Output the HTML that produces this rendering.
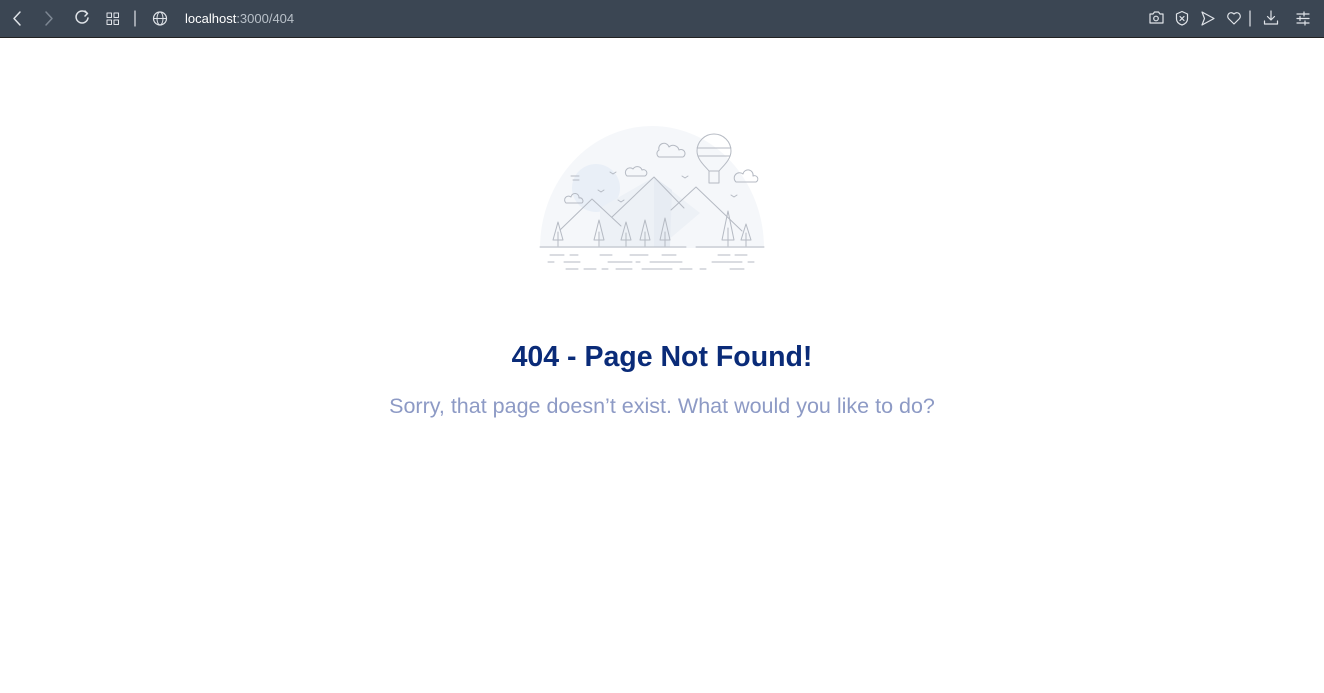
<!DOCTYPE html>
<html><head><meta charset="utf-8"><style>
*{margin:0;padding:0;box-sizing:border-box}
body{width:1324px;height:693px;background:#fff;font-family:"Liberation Sans",sans-serif;overflow:hidden;position:relative}
.bar{position:absolute;left:0;top:0;width:1324px;height:38px;background:#3b4653;border-bottom:1px solid #222}
.url{position:absolute;left:185px;top:11px;font-size:13px;color:#fff}
.url span{color:#b8c0c8}
h1{position:absolute;top:341px;left:0;width:1324px;text-align:center;font-size:28.5px;font-weight:bold;color:#0a2b78}
p{position:absolute;top:394px;left:0;width:1324px;text-align:center;font-size:21.5px;color:#8d9ac5}
</style></head><body>
<div class="bar">
<svg width="1324" height="38" style="position:absolute;left:0;top:0" fill="none" stroke-linecap="round" stroke-linejoin="round">
<g stroke="#dfe3e8" stroke-width="1.5">
<path d="M20 12 L14 18.5 L20 25"/>
<path d="M87 13.5 A6 6 0 1 0 88 18" />
<path d="M85 11 L87.5 13.5 L85 16"/>
<rect x="107" y="13" width="4.5" height="4.5" stroke-width="1"/><rect x="114" y="13" width="4.5" height="4.5" stroke-width="1"/>
<rect x="107" y="20" width="4.5" height="4.5" stroke-width="1"/><rect x="114" y="20" width="4.5" height="4.5" stroke-width="1"/>
<path d="M135 11 V26" stroke-width="1.2"/>
<circle cx="160" cy="18.5" r="6.5" stroke-width="1.2"/><ellipse cx="160" cy="18.5" rx="3" ry="6.5" stroke-width="1"/><path d="M153.5 18.5 H166.5" stroke-width="1"/>
</g>
<path d="M46 12 L52 18.5 L46 25" stroke="#7d8793" stroke-width="1.5"/>
<g stroke="#dfe3e8" stroke-width="1.2">
<path d="M1150 14 h3 l1.5-2 h4 l1.5 2 h3 v9 h-13 z"/><circle cx="1156" cy="18.5" r="2.3"/>
<path d="M1182 11.5 l5.5 2.5 v5 c0 3-2.5 5-5.5 6 c-3-1-5.5-3-5.5-6 v-5 z"/><path d="M1180 16.5 l4 4 M1184 16.5 l-4 4"/>
<path d="M1202 12 L1214 18.5 L1202 25 L1204.5 18.5 Z"/>
<path d="M1234 24 l-5.5-5.5 a3.2 3.2 0 0 1 5.5-4.5 a3.2 3.2 0 0 1 5.5 4.5 z"/>
<path d="M1250 11 V26"/>
<path d="M1271 11 v9 M1267.5 16.5 l3.5 3.5 l3.5-3.5 M1264.5 21 v3 h13 v-3"/>
<path d="M1297 14 h12 M1297 18.5 h12 M1297 23 h12 M1304 12 v4 M1300 16.5 v4 M1305 21 v4"/>
</g></svg>
<div class="url">localhost<span>:3000/404</span></div>
</div>
<svg width="1324" height="300" style="position:absolute;left:0;top:0" fill="none" stroke-linecap="round" stroke-linejoin="round">
<path d="M540 248 A112 122 0 0 1 764 248 Z" fill="#f5f7fa"/>
<circle cx="596" cy="188" r="24" fill="#e9eff7"/>
<path d="M600 208 L654 177 L700 213 L660 247 L600 247 Z" fill="#edf1f6"/>
<path d="M654 177 L672 190 L670 247 L654 247 Z" fill="#e7ecf3"/>
<g stroke="#b5bac3" stroke-width="1">
<path d="M560 230 L592 199 L621 226"/>
<path d="M612 217 L654 177 L684 208"/>
<path d="M671 210 L696 187 L742 231"/>
<path d="M540 247 H686 M696 247 H764"/>
<path d="M558 222 L553 240 L563 240 Z M558 232 V246"/>
<path d="M599 220 L594 240 L604 240 Z M599 232 V246"/>
<path d="M626 222 L621 240 L631 240 Z M626 233 V246"/>
<path d="M645 220 L640 240 L650 240 Z M645 232 V246"/>
<path d="M665 218 L660 240 L670 240 Z M665 232 V246"/>
<path d="M728 211 L722 240 L734 240 Z M728 228 V246"/>
<path d="M746 224 L741 240 L751 240 Z M746 233 V246"/>
<path d="M714 134 a17 17 0 0 1 17 17 c0 9-9 16-12 20 h-10 c-3-4-12-11-12-20 a17 17 0 0 1 17-17z M697 148 H731 M698 156 H730 M709 171 v12 h10 v-12"/>
<path d="M659 157 h24 a4 4 0 0 0 -4-7 a6 6 0 0 0 -10-3 a5 5 0 0 0 -10 3 a4 4 0 0 0 0 7z"/>
<path d="M627 176 h18 a3 3 0 0 0 -3-6 a5 5 0 0 0 -9-1 a4 4 0 0 0 -6 7z"/>
<path d="M736 182 h20 a3 3 0 0 0 -3-6 a5 5 0 0 0 -10-2 a4 4 0 0 0 -7 8z"/>
<path d="M566 203 h16 a3 3 0 0 0 -3-5 a4 4 0 0 0 -8-1 a3 3 0 0 0 -5 6z"/>
<path d="M610 172 l3 2 l3-2 M682 176 l3 2 l3-2 M598 190 l3 2 l3-2 M618 200 l3 2 l3-2 M571 176 h8 M573 180 h6 M731 195 l3 2 l3-2"/>
<path d="M550 255 h14 M570 255 h8 M600 255 h12 M630 255 h18 M662 255 h14 M718 255 h12 M735 255 h12 M548 262 h6 M564 262 h16 M608 262 h24 M636 262 h4 M650 262 h32 M712 262 h30 M748 262 h6 M566 269 h12 M584 269 h12 M602 269 h6 M616 269 h16 M642 269 h30 M680 269 h12 M700 269 h6 M730 269 h14"/>
</g></svg>
<h1>404 - Page Not Found!</h1>
<p>Sorry, that page doesn’t exist. What would you like to do?</p>
</body></html>
